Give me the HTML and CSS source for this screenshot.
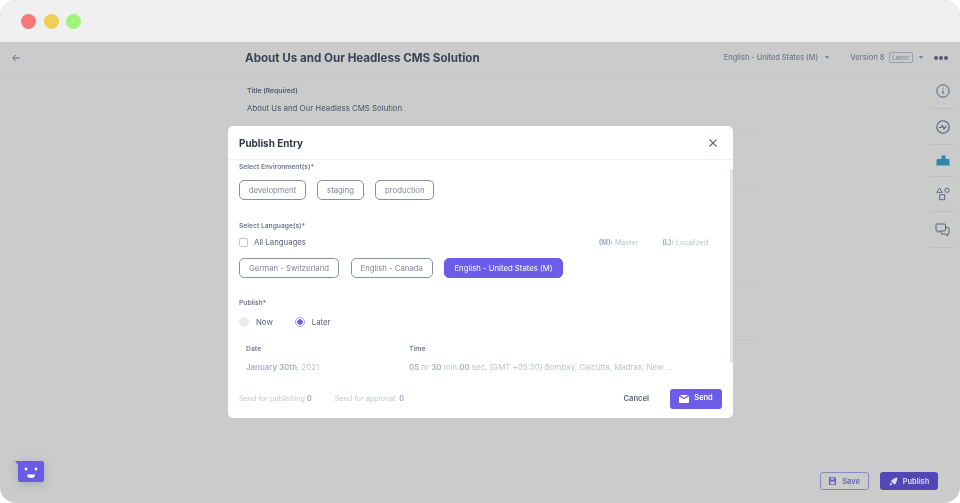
FILE: index.html
```html
<!DOCTYPE html>
<html lang="en">
<head>
<meta charset="utf-8">
<title>Publish Entry</title>
<link rel="stylesheet" href="styles.css">
</head>
<body>
<div class="window">
  <div class="titlebar">
    <span class="dot red"></span><span class="dot yellow"></span><span class="dot green"></span>
  </div>
  <div class="app">
    <header class="topbar">
      <svg class="back" width="8" height="8" viewBox="0 0 8 8" fill="none" stroke="#5f6b85" stroke-width="1"><path d="M7.500 4H1M3.800 1 .8 4l3 3"/></svg>
      <h1 class="entry-title">About Us and Our Headless CMS Solution</h1>
      <div class="top-meta">
        <span class="locale">English - United States (M)</span><span class="caret"></span>
        <span class="version">Version 8</span><span class="latest">Latest</span><span class="caret wide"></span>
        <span class="more"><i></i><i></i><i></i></span>
      </div>
    </header>
    <div class="content">
      <main class="form">
        <div class="field first">
          <div class="field-label">Title (Required)</div>
          <div class="field-value">About Us and Our Headless CMS Solution</div>
        </div>
        <div class="field short"></div>
        <div class="field tall"></div>
        <div class="field short"></div>
      </main>
      <aside class="rail">
        <div class="rail-item r1"><svg width="14" height="14" viewBox="0 0 14 14" fill="none" stroke="#55607a" stroke-width="1"><circle cx="7" cy="7" r="6.200"/><path d="M7 6.300v3.800M7 3.800v1"/></svg></div>
        <div class="rail-item r2"><svg width="14" height="14" viewBox="0 0 14 14" fill="none" stroke="#55607a" stroke-width="1.100"><circle cx="7" cy="7" r="6.200"/><path d="M3 7.500 5 7.500 6.300 5.500 8 8.800 9.200 7 11 7"/></svg></div>
        <div class="rail-item r3"><svg width="14" height="11" viewBox="0 0 14 11"><path fill="#2f86a8" d="M5.500 .5h4v3l1 .5h3v6.500H.5V4.500l2-.5h3z"/></svg></div>
        <div class="rail-item r4"><svg width="14" height="14" viewBox="0 0 14 14" fill="none" stroke="#55607a" stroke-width=".9"><path d="M3.500 1 6.200 5.400H.8z"/><circle cx="11" cy="3.300" r="2.100"/><rect x="3.700" y="7.700" width="5" height="5"/></svg></div>
        <div class="rail-item r5"><svg width="15" height="14" viewBox="0 0 15 14" fill="none" stroke="#55607a" stroke-width="1"><path d="M1 2a1 1 0 0 1 1-1h7.500a1 1 0 0 1 1 1v5a1 1 0 0 1-1 1H4.500L3 9.500V8H2a1 1 0 0 1-1-1z"/><path d="M10.500 4.500H13a1 1 0 0 1 1 1V10a1 1 0 0 1-1 1h-.5v2L10 11H7a1 1 0 0 1-1-1V8"/></svg></div>
      </aside>
    </div>
    <footer class="page-actions">
      <button class="btn-save"><svg width="7" height="8" viewBox="0 0 7 8"><path fill="#6a62b8" d="M0 0h5.500L7 1.500V8H0zM1.500 .8v1.800h3.500V.8zM1.500 4.500v2.800h4V4.500z"/></svg>Save</button>
      <button class="btn-publish"><svg width="9" height="9" viewBox="0 0 9 9"><path fill="#dfdcf5" d="M2.500 3 7.500 .5 8.500 1 7 6.500 5.500 7.500 2 4.200zM1.500 5.500l2 2L.5 8.500z"/></svg>Publish</button>
    </footer>
  </div>
  <div class="bot">
    <svg class="bot-icon" width="29" height="21" viewBox="0 0 29 21"><path fill="#6a5ae6" d="M0 0h27a2 2 0 0 1 2 2v17a2 2 0 0 1-2 2H5a2 2 0 0 1-2-2V4z"/><circle cx="11" cy="8" r="1.400" fill="#fff"/><circle cx="21" cy="8" r="1.400" fill="#fff"/><path fill="#fff" d="M12 13.500h8a4 3.500 0 0 1-8 0z"/></svg>
  </div>
</div>

<section class="modal">
  <div class="modal-head">
    <h2>Publish Entry</h2>
    <svg width="10" height="10" viewBox="0 0 10 10" fill="none" stroke="#5d6880" stroke-width="1.100"><path d="M1.500 1.500l7 7M8.500 1.500l-7 7"/></svg>
  </div>
  <div class="modal-body">
    <div class="label">Select Environment(s)*</div>
    <div class="chips env">
      <span class="chip">development</span><span class="chip">staging</span><span class="chip">production</span>
    </div>
    <div class="label lang-label">Select Language(s)*</div>
    <div class="lang-row">
      <label class="check"><span class="box"></span>All Languages</label>
      <div class="legend"><span><b>(M):</b> Master</span><span><b>(L):</b> Localized</span></div>
    </div>
    <div class="chips langs">
      <span class="chip">German - Switzerland</span><span class="chip">English - Canada</span><span class="chip active">English - United States (M)</span>
    </div>
    <div class="label pub-label">Publish*</div>
    <div class="radios">
      <span class="radio"><i class="circle off"></i>Now</span>
      <span class="radio"><i class="circle on"></i>Later</span>
    </div>
    <div class="schedule">
      <div class="col-date">
        <div class="col-head">Date</div>
        <div class="col-val"><b>January 30th</b>, 2021</div>
      </div>
      <div class="col-time">
        <div class="col-head">Time</div>
        <div class="col-val"><b>05</b> hr <b>30</b> min <b>00</b> sec, (GMT +05:30) Bombay, Calcutta, Madras, New ...</div>
      </div>
    </div>
    <div class="scrollbar"></div>
  </div>
  <div class="modal-foot">
    <span class="count">Send for publishing <b>0</b></span>
    <span class="count">Send for approval: <b>0</b></span>
    <span class="cancel">Cancel</span>
    <button class="send"><svg width="10" height="8" viewBox="0 0 10 8"><path fill="#fff" d="M0 1.300 5 4.300l5-3V7a1 1 0 0 1-1 1H1a1 1 0 0 1-1-1zM.8 0h8.400L5 2.800z"/></svg><span class="send-text">Send</span></button>
  </div>
</section>
</body>
</html>
```
FILE: styles.css
```css
* { box-sizing: border-box; }
html, body { margin: 0; height: 100%; }
body {
  width: 960px; height: 503px; overflow: hidden; background: #fff;
  font-family: Inter, "Liberation Sans", sans-serif; position: relative;
  filter: blur(.35px);
}
.window {
  width: 960px; height: 503px; border-radius: 16px; overflow: hidden;
  display: flex; flex-direction: column; background: #cbcbcb; position: relative;
}
.titlebar {
  height: 42px; flex: none; background: #f0f0f0;
  display: flex; align-items: center; gap: 7.500px; padding: 0 0 0 21px;
}
.dot { width: 15px; height: 15px; border-radius: 50%; }
.red { background: #fb7676; } .yellow { background: #eed057; } .green { background: #a0f47b; }
.app { flex: 1; display: flex; flex-direction: column; min-height: 0; }
.topbar {
  height: 32px; flex: none; display: flex; align-items: center;
  padding: 0 12px 0 12px; border-bottom: 1px solid #c7c7c8;
}
.back { flex: none; }
.entry-title { margin: 0 0 0 225px; font-size: 11.600px; font-weight: 700; color: #3a4256; white-space: nowrap; }
.top-meta { margin-left: auto; display: flex; align-items: center; font-size: 7.400px; font-weight: 500; color: #70798f; }
.caret { width: 0; height: 0; border: 2.500px solid transparent; border-top: 3px solid #79829a; border-bottom: 0; margin-left: 7px; }
.caret.wide { margin-left: 6px; }
.version { margin-left: 21px; font-size: 7.600px; }
.latest { margin-left: 4px; width: 24px; height: 11px; display: flex; align-items: center; justify-content: center; font-size: 5.800px; border: 1px solid #989eb0; border-radius: 2px; color: #7d869c; }
.more { margin-left: 11px; display: flex; gap: 1.200px; }
.more i { width: 4px; height: 4px; border-radius: 50%; background: #515b74; }
.content { flex: 1; display: flex; min-height: 0; }
.form { width: 755px; flex: none; padding: 12px 0 0 247px; }
.field { border-bottom: 1px solid #c7c7c8; }
.first { height: 44px; }
.short { height: 55px; }
.tall { height: 101px; }
.field-label { font-size: 6.800px; font-weight: 600; color: #51596e; line-height: 9px; }
.field-value { font-size: 7.850px; color: #4a5267; margin-top: 8px; line-height: 11px; }
.rail { width: 25px; margin-left: auto; margin-right: 5px; flex: none; align-self: flex-start; }
.rail-item {
  display: flex; align-items: center; justify-content: center;
  border-bottom: 1px solid #bfbfc2;
}
.r1 { height: 35px; } .r2 { height: 36px; } .r3 { height: 32px; } .r4 { height: 35px; } .r5 { height: 36px; }
.page-actions {
  flex: none; display: flex; justify-content: flex-end; gap: 11px;
  padding: 0 22px 13px 0;
}
.page-actions button {
  height: 18px; border-radius: 3px; font: 600 7.400px Inter, "Liberation Sans", sans-serif;
  display: flex; align-items: center; justify-content: center; padding: 0;
}
.btn-save { width: 49px; gap: 6px; background: transparent; border: 1px solid #8b85c4; color: #6a62b8; }
.btn-publish { width: 58px; gap: 5px; background: #5546b5; border: 0; color: #dfdcf5; }
.bot { position: absolute; left: 15px; top: 461px; }
.bot-icon { display: block; filter: drop-shadow(0 2px 5px rgba(90,80,180,.3)); }

.modal {
  position: absolute; left: 228px; top: 126px; width: 505px; height: 292px;
  background: #fff; border-radius: 5px; display: flex; flex-direction: column; overflow: hidden;
}
.modal-head {
  height: 34px; flex: none; padding: 0 15px 0 11px; border-bottom: 1px solid #eff0f3;
  display: flex; align-items: center; justify-content: space-between;
}
.modal-head h2 { margin: 0; font-size: 9.900px; font-weight: 700; color: #2f3547; }
.modal-body { flex: 1; padding: 0 11px; position: relative; min-height: 0; }
.scrollbar { position: absolute; right: 0; top: 9px; bottom: 16px; width: 3px; background: #e2e4ec; }
.label { font-size: 6.700px; font-weight: 600; color: #6e7890; line-height: 12px; margin-top: 1px; }
.chips { display: flex; }
.chip {
  height: 20px; border: 1px solid #8a8f9c; border-radius: 5px; padding: 0 8.700px;
  display: flex; align-items: center; font-size: 7.750px; color: #7f8698; white-space: nowrap;
}
.env { margin-top: 7px; gap: 11.500px; }
.lang-label { margin-top: 20px; }
.lang-row { display: flex; align-items: center; justify-content: space-between; margin-top: 3px; height: 14px; padding-right: 14px; }
.check { display: flex; align-items: center; gap: 6px; font-size: 7.800px; color: #555d72; }
.box { width: 9px; height: 9px; border: 1px solid #c0c4ce; border-radius: 2px; }
.legend { display: flex; gap: 24px; font-size: 7.100px; color: #bcc2d0; }
.legend b { color: #a4abbd; font-weight: 700; }
.langs { margin-top: 9px; gap: 11.500px; }
.langs .chip { padding: 0 9px; }
.chip.active { background: #6c5ce7; border-color: #6c5ce7; color: #fff; }
.pub-label { margin-top: 19px; }
.radios { display: flex; gap: 22px; margin-top: 6px; height: 14px; }
.radio { display: flex; align-items: center; gap: 7px; font-size: 7.800px; color: #555d72; }
.circle { width: 10px; height: 10px; border-radius: 50%; display: block; }
.circle.off { background: #e8edf3; }
.circle.on { border: 1px solid #a79df0; background: radial-gradient(circle, #6c5ce7 0 2.500px, #fff 3px); }
.schedule { display: flex; margin-top: 15px; padding-left: 7px; }
.col-date { width: 163px; }
.col-head { font-size: 6.800px; font-weight: 600; color: #727b92; line-height: 10px; }
.col-val { font-size: 7.870px; color: #bcc2d0; margin-top: 7px; line-height: 12px; white-space: nowrap; }
.col-val b { color: #a8b0c4; font-weight: 600; }
.modal-foot {
  height: 39px; flex: none; display: flex; align-items: center; padding: 0 11px; font-size: 7.200px; color: #c2c7d3;
}
.count { margin-right: 23px; }
.count b { color: #98a0b5; font-weight: 600; }
.cancel { margin-left: auto; font-size: 7.600px; font-weight: 600; color: #5c6478; margin-right: 21px; }
.send {
  width: 52px; height: 20px; border: 0; border-radius: 3px; background: #6c5ce7; color: #fff; padding: 0;
  font: 600 7.400px Inter, "Liberation Sans", sans-serif; display: flex; align-items: center; justify-content: center; gap: 5px;
}
.send-text { margin-bottom: 2px; }
```
